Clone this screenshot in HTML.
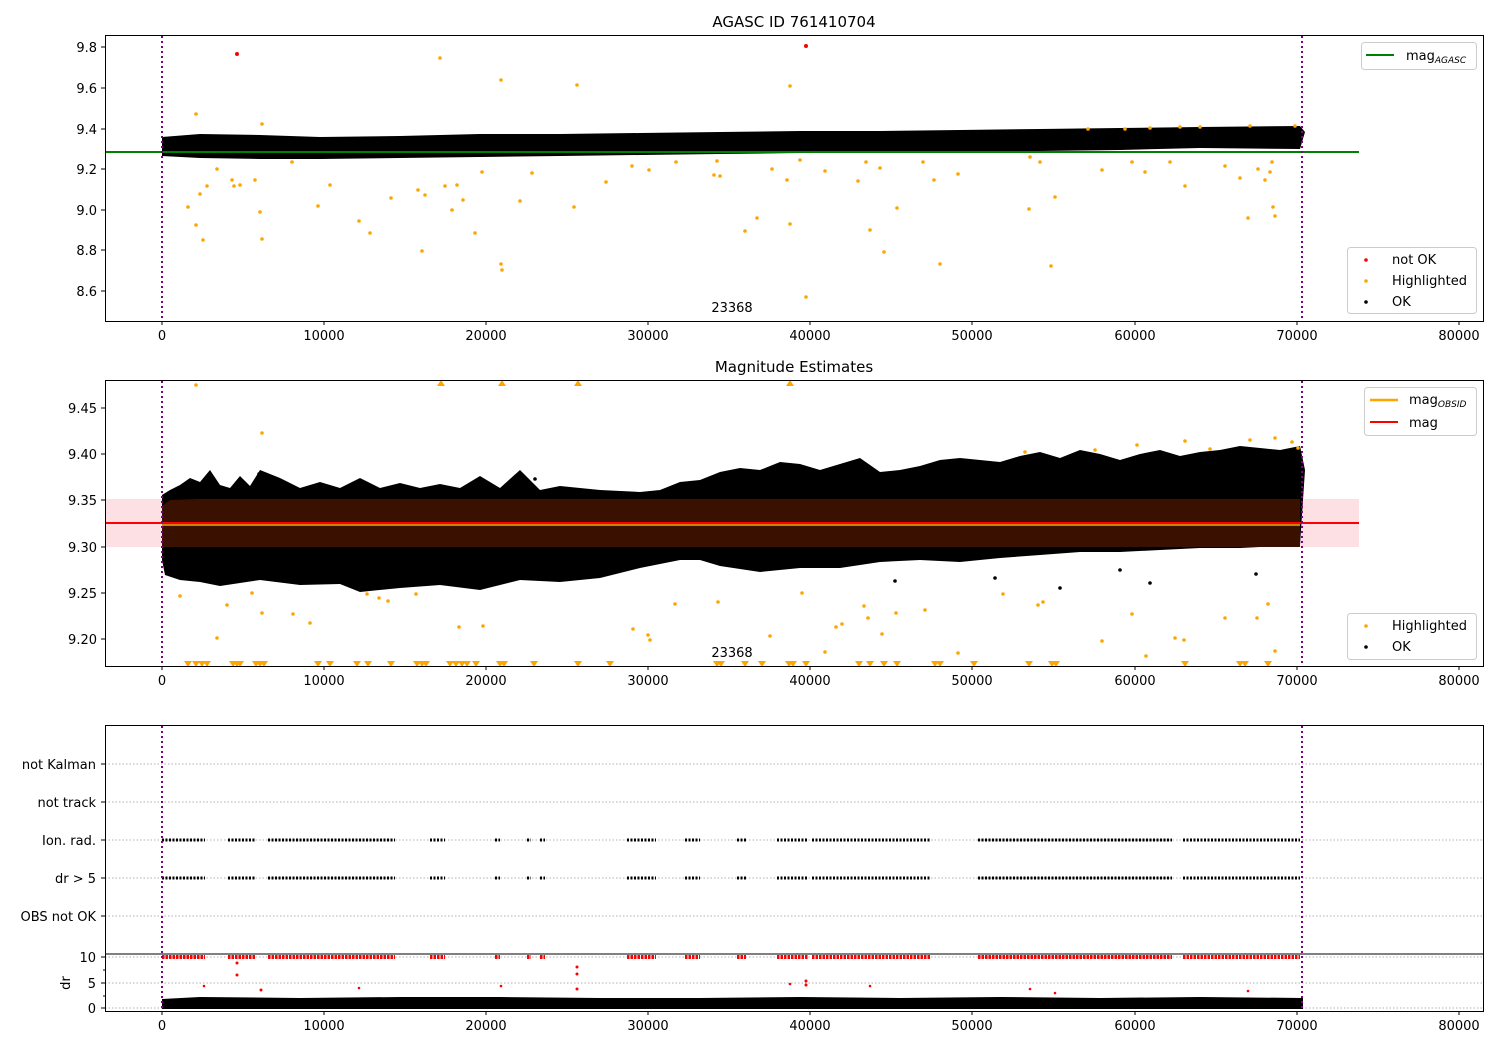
<!DOCTYPE html>
<html><head><meta charset="utf-8"><style>
body{margin:0;background:#fff}
svg{display:block;font-family:"DejaVu Sans","Liberation Sans",sans-serif}
</style></head><body>
<svg width="1500" height="1050" viewBox="0 0 1500 1050" xmlns="http://www.w3.org/2000/svg">
<rect width="1500" height="1050" fill="#fff"/>
<defs>
<g id="xt">
 <g stroke="#000" stroke-width="1"><line x1="162" y1="0" x2="162" y2="4"/><line x1="324" y1="0" x2="324" y2="4"/><line x1="486" y1="0" x2="486" y2="4"/><line x1="648" y1="0" x2="648" y2="4"/><line x1="810" y1="0" x2="810" y2="4"/><line x1="972" y1="0" x2="972" y2="4"/><line x1="1135" y1="0" x2="1135" y2="4"/><line x1="1297" y1="0" x2="1297" y2="4"/><line x1="1459" y1="0" x2="1459" y2="4"/></g>
 <g font-size="13" text-anchor="middle" fill="#000"><text x="162" y="19">0</text><text x="324" y="19">10000</text><text x="486" y="19">20000</text><text x="648" y="19">30000</text><text x="810" y="19">40000</text><text x="972" y="19">50000</text><text x="1135" y="19">60000</text><text x="1297" y="19">70000</text><text x="1459" y="19">80000</text></g>
</g>
</defs>

<!-- ========== PLOT 1 ========== -->
<text x="794" y="27" font-size="15" text-anchor="middle">AGASC ID 761410704</text>
<polygon fill="#000" points="162,137 200,134 260,135 320,137 400,136 480,134 560,134 640,133 720,132 800,131 880,131 960,130 1040,129 1120,128 1200,127 1300,126 1305,132 1300,149 1200,148 1120,150 1040,151 960,152 880,153 800,153 720,154 640,155 560,156 480,157 400,158 320,159 260,159 200,158 162,156"/>
<line x1="105" y1="152" x2="1359" y2="152" stroke="#008000" stroke-width="2"/>
<g fill="#ffa500">
<circle cx="196" cy="114" r="1.8"/><circle cx="262" cy="124" r="1.8"/><circle cx="188" cy="207" r="1.8"/><circle cx="196" cy="225" r="1.8"/><circle cx="203" cy="240" r="1.8"/><circle cx="200" cy="194" r="1.8"/><circle cx="207" cy="186" r="1.8"/><circle cx="217" cy="169" r="1.8"/><circle cx="232" cy="180" r="1.8"/><circle cx="234" cy="186" r="1.8"/><circle cx="240" cy="185" r="1.8"/><circle cx="255" cy="180" r="1.8"/><circle cx="260" cy="212" r="1.8"/><circle cx="262" cy="239" r="1.8"/><circle cx="292" cy="162" r="1.8"/><circle cx="318" cy="206" r="1.8"/><circle cx="330" cy="185" r="1.8"/><circle cx="359" cy="221" r="1.8"/><circle cx="370" cy="233" r="1.8"/><circle cx="391" cy="198" r="1.8"/><circle cx="418" cy="190" r="1.8"/><circle cx="422" cy="251" r="1.8"/><circle cx="425" cy="195" r="1.8"/><circle cx="440" cy="58" r="1.8"/><circle cx="445" cy="186" r="1.8"/><circle cx="452" cy="210" r="1.8"/><circle cx="457" cy="185" r="1.8"/><circle cx="463" cy="200" r="1.8"/><circle cx="475" cy="233" r="1.8"/><circle cx="482" cy="172" r="1.8"/><circle cx="501" cy="80" r="1.8"/><circle cx="501" cy="264" r="1.8"/><circle cx="502" cy="270" r="1.8"/><circle cx="520" cy="201" r="1.8"/><circle cx="532" cy="173" r="1.8"/><circle cx="574" cy="207" r="1.8"/><circle cx="577" cy="85" r="1.8"/><circle cx="606" cy="182" r="1.8"/><circle cx="632" cy="166" r="1.8"/><circle cx="649" cy="170" r="1.8"/><circle cx="676" cy="162" r="1.8"/><circle cx="714" cy="175" r="1.8"/><circle cx="717" cy="161" r="1.8"/><circle cx="720" cy="176" r="1.8"/><circle cx="745" cy="231" r="1.8"/><circle cx="757" cy="218" r="1.8"/><circle cx="772" cy="169" r="1.8"/><circle cx="787" cy="180" r="1.8"/><circle cx="790" cy="86" r="1.8"/><circle cx="790" cy="224" r="1.8"/><circle cx="800" cy="160" r="1.8"/><circle cx="825" cy="171" r="1.8"/><circle cx="858" cy="181" r="1.8"/><circle cx="866" cy="162" r="1.8"/><circle cx="870" cy="230" r="1.8"/><circle cx="880" cy="168" r="1.8"/><circle cx="884" cy="252" r="1.8"/><circle cx="897" cy="208" r="1.8"/><circle cx="923" cy="162" r="1.8"/><circle cx="934" cy="180" r="1.8"/><circle cx="940" cy="264" r="1.8"/><circle cx="958" cy="174" r="1.8"/><circle cx="1030" cy="157" r="1.8"/><circle cx="1029" cy="209" r="1.8"/><circle cx="1040" cy="162" r="1.8"/><circle cx="1051" cy="266" r="1.8"/><circle cx="1055" cy="197" r="1.8"/><circle cx="1102" cy="170" r="1.8"/><circle cx="1132" cy="162" r="1.8"/><circle cx="1145" cy="172" r="1.8"/><circle cx="1170" cy="162" r="1.8"/><circle cx="1185" cy="186" r="1.8"/><circle cx="1225" cy="166" r="1.8"/><circle cx="1240" cy="178" r="1.8"/><circle cx="1248" cy="218" r="1.8"/><circle cx="1258" cy="169" r="1.8"/><circle cx="1265" cy="180" r="1.8"/><circle cx="1272" cy="162" r="1.8"/><circle cx="1273" cy="207" r="1.8"/><circle cx="1275" cy="216" r="1.8"/><circle cx="1270" cy="172" r="1.8"/>
<circle cx="1125" cy="129" r="1.8"/><circle cx="1150" cy="128" r="1.8"/><circle cx="1180" cy="127" r="1.8"/><circle cx="1200" cy="127" r="1.8"/><circle cx="1250" cy="126" r="1.8"/><circle cx="1295" cy="126" r="1.8"/><circle cx="1088" cy="129" r="1.8"/>
</g>
<circle cx="237" cy="54" r="2" fill="#f00"/><circle cx="806" cy="46" r="2" fill="#f00"/>
<circle cx="806" cy="297" r="1.8" fill="#ffa500"/>
<line x1="162" y1="36" x2="162" y2="320" stroke="#800080" stroke-width="2" stroke-dasharray="2,3"/>
<line x1="1302" y1="36" x2="1302" y2="320" stroke="#800080" stroke-width="2" stroke-dasharray="2,3"/>
<text x="732" y="312" font-size="13" text-anchor="middle">23368</text>
<rect x="105.5" y="35.5" width="1378" height="286" fill="none" stroke="#000"/>
<g stroke="#000"><line x1="101" y1="47" x2="105" y2="47"/><line x1="101" y1="88" x2="105" y2="88"/><line x1="101" y1="129" x2="105" y2="129"/><line x1="101" y1="169" x2="105" y2="169"/><line x1="101" y1="210" x2="105" y2="210"/><line x1="101" y1="250" x2="105" y2="250"/><line x1="101" y1="291" x2="105" y2="291"/></g>
<g font-size="13" text-anchor="end"><text x="97" y="52">9.8</text><text x="97" y="93">9.6</text><text x="97" y="134">9.4</text><text x="97" y="174">9.2</text><text x="97" y="215">9.0</text><text x="97" y="255">8.8</text><text x="97" y="296">8.6</text></g>
<g transform="translate(0,321)"><use href="#xt"/></g>
<rect x="1361.5" y="42.5" width="115" height="27" rx="3" fill="#fff" stroke="#ccc"/>
<line x1="1366" y1="55" x2="1394" y2="55" stroke="#008000" stroke-width="2"/>
<text x="1406" y="60" font-size="13">mag<tspan font-size="9" font-style="italic" dy="3">AGASC</tspan></text>
<rect x="1347.5" y="247.5" width="129" height="66" rx="3" fill="#fff" stroke="#ccc"/>
<circle cx="1366" cy="260" r="1.8" fill="#f00"/><circle cx="1366" cy="281" r="1.8" fill="#ffa500"/><circle cx="1366" cy="302" r="1.8" fill="#000"/>
<g font-size="13"><text x="1392" y="264">not OK</text><text x="1392" y="285">Highlighted</text><text x="1392" y="306">OK</text></g>

<!-- ========== PLOT 2 ========== -->
<text x="794" y="372" font-size="15" text-anchor="middle">Magnitude Estimates</text>
<rect x="105" y="499" width="1254" height="48" fill="#fde0e3"/>
<rect x="162" y="499" width="1138" height="48" fill="#fdd3c2"/>
<polygon fill="#000" points="162,495 170,490 180,485 190,478 200,482 210,470 220,485 230,488 240,476 250,486 260,470 280,478 300,488 320,482 340,488 360,478 380,488 400,483 420,488 440,484 460,488 480,476 500,488 520,470 540,490 560,486 600,490 640,492 660,490 680,482 700,480 720,472 740,468 760,470 780,462 800,464 820,470 840,464 860,458 880,472 900,470 920,466 940,460 960,458 980,460 1000,462 1020,456 1040,452 1060,458 1080,450 1100,454 1120,460 1140,454 1160,450 1180,456 1200,452 1220,450 1240,446 1260,448 1280,450 1300,446 1305,470 1300,545 1280,545 1260,547 1240,548 1200,548 1160,550 1120,552 1080,552 1040,555 1000,558 960,562 920,560 880,562 840,568 800,568 760,572 720,566 700,560 680,560 640,568 600,578 560,582 520,580 480,590 440,585 400,588 360,592 340,584 300,585 260,580 220,586 200,582 180,580 165,575 162,560"/>
<polygon fill="#3a1100" points="162,506 170,500 200,499 1300,499 1300,547 162,547"/>
<line x1="105" y1="523" x2="1359" y2="523" stroke="#f00" stroke-width="2"/>
<line x1="162" y1="525" x2="1300" y2="525" stroke="#ffa500" stroke-width="1.5"/>
<g fill="#000"><circle cx="259" cy="474" r="1.8"/><circle cx="260" cy="495" r="1.8"/><circle cx="535" cy="479" r="1.8"/><circle cx="995" cy="578" r="1.8"/><circle cx="1120" cy="570" r="1.8"/><circle cx="1150" cy="583" r="1.8"/><circle cx="1256" cy="574" r="1.8"/><circle cx="895" cy="581" r="1.8"/><circle cx="1060" cy="588" r="1.8"/></g>
<g fill="#ffa500">
<circle cx="196" cy="385" r="1.8"/><circle cx="262" cy="433" r="1.8"/><circle cx="180" cy="596" r="1.8"/><circle cx="227" cy="605" r="1.8"/><circle cx="217" cy="638" r="1.8"/><circle cx="252" cy="593" r="1.8"/><circle cx="262" cy="613" r="1.8"/><circle cx="293" cy="614" r="1.8"/><circle cx="310" cy="623" r="1.8"/><circle cx="367" cy="594" r="1.8"/><circle cx="379" cy="598" r="1.8"/><circle cx="388" cy="601" r="1.8"/><circle cx="416" cy="594" r="1.8"/><circle cx="459" cy="627" r="1.8"/><circle cx="483" cy="626" r="1.8"/><circle cx="633" cy="629" r="1.8"/><circle cx="648" cy="635" r="1.8"/><circle cx="650" cy="640" r="1.8"/><circle cx="675" cy="604" r="1.8"/><circle cx="718" cy="602" r="1.8"/><circle cx="770" cy="636" r="1.8"/><circle cx="802" cy="593" r="1.8"/><circle cx="825" cy="652" r="1.8"/><circle cx="836" cy="627" r="1.8"/><circle cx="842" cy="624" r="1.8"/><circle cx="864" cy="606" r="1.8"/><circle cx="868" cy="618" r="1.8"/><circle cx="882" cy="634" r="1.8"/><circle cx="896" cy="613" r="1.8"/><circle cx="925" cy="610" r="1.8"/><circle cx="958" cy="653" r="1.8"/><circle cx="1003" cy="594" r="1.8"/><circle cx="1038" cy="605" r="1.8"/><circle cx="1043" cy="602" r="1.8"/><circle cx="1102" cy="641" r="1.8"/><circle cx="1132" cy="614" r="1.8"/><circle cx="1146" cy="656" r="1.8"/><circle cx="1175" cy="638" r="1.8"/><circle cx="1184" cy="640" r="1.8"/><circle cx="1225" cy="618" r="1.8"/><circle cx="1257" cy="618" r="1.8"/><circle cx="1268" cy="604" r="1.8"/><circle cx="1275" cy="651" r="1.8"/><circle cx="1025" cy="452" r="1.8"/><circle cx="1095" cy="450" r="1.8"/><circle cx="1137" cy="445" r="1.8"/><circle cx="1185" cy="441" r="1.8"/><circle cx="1210" cy="449" r="1.8"/><circle cx="1250" cy="440" r="1.8"/><circle cx="1292" cy="442" r="1.8"/><circle cx="1275" cy="438" r="1.8"/><circle cx="1298" cy="448" r="1.8"/>
</g>
<g fill="#ffa500">
<path d="M437,386 l4,-6 l4,6z M498,386 l4,-6 l4,6z M574,386 l4,-6 l4,6z M786,386 l4,-6 l4,6z"/>
<path d="M184,661 l4,6 l4,-6z M192,661 l4,6 l4,-6z M198,661 l4,6 l4,-6z M203,661 l4,6 l4,-6z M229,661 l4,6 l4,-6z M233,661 l4,6 l4,-6z M236,661 l4,6 l4,-6z M252,661 l4,6 l4,-6z M256,661 l4,6 l4,-6z M260,661 l4,6 l4,-6z M314,661 l4,6 l4,-6z M326,661 l4,6 l4,-6z M353,661 l4,6 l4,-6z M364,661 l4,6 l4,-6z M387,661 l4,6 l4,-6z M413,661 l4,6 l4,-6z M418,661 l4,6 l4,-6z M422,661 l4,6 l4,-6z M446,661 l4,6 l4,-6z M452,661 l4,6 l4,-6z M458,661 l4,6 l4,-6z M463,661 l4,6 l4,-6z M472,661 l4,6 l4,-6z M496,661 l4,6 l4,-6z M500,661 l4,6 l4,-6z M530,661 l4,6 l4,-6z M574,661 l4,6 l4,-6z M606,661 l4,6 l4,-6z M713,661 l4,6 l4,-6z M717,661 l4,6 l4,-6z M741,661 l4,6 l4,-6z M758,661 l4,6 l4,-6z M785,661 l4,6 l4,-6z M789,661 l4,6 l4,-6z M802,661 l4,6 l4,-6z M855,661 l4,6 l4,-6z M866,661 l4,6 l4,-6z M880,661 l4,6 l4,-6z M893,661 l4,6 l4,-6z M931,661 l4,6 l4,-6z M936,661 l4,6 l4,-6z M970,661 l4,6 l4,-6z M1025,661 l4,6 l4,-6z M1048,661 l4,6 l4,-6z M1052,661 l4,6 l4,-6z M1181,661 l4,6 l4,-6z M1236,661 l4,6 l4,-6z M1241,661 l4,6 l4,-6z M1264,661 l4,6 l4,-6z"/>
</g>
<line x1="162" y1="381" x2="162" y2="665" stroke="#800080" stroke-width="2" stroke-dasharray="2,3"/>
<line x1="1302" y1="381" x2="1302" y2="665" stroke="#800080" stroke-width="2" stroke-dasharray="2,3"/>
<text x="732" y="657" font-size="13" text-anchor="middle">23368</text>
<rect x="105.5" y="380.5" width="1378" height="286" fill="none" stroke="#000"/>
<g stroke="#000"><line x1="101" y1="408" x2="105" y2="408"/><line x1="101" y1="454" x2="105" y2="454"/><line x1="101" y1="500" x2="105" y2="500"/><line x1="101" y1="547" x2="105" y2="547"/><line x1="101" y1="593" x2="105" y2="593"/><line x1="101" y1="639" x2="105" y2="639"/></g>
<g font-size="13" text-anchor="end"><text x="97" y="413">9.45</text><text x="97" y="459">9.40</text><text x="97" y="505">9.35</text><text x="97" y="552">9.30</text><text x="97" y="598">9.25</text><text x="97" y="644">9.20</text></g>
<g transform="translate(0,666)"><use href="#xt"/></g>
<rect x="1364.5" y="387.5" width="112" height="48" rx="3" fill="#fff" stroke="#ccc"/>
<line x1="1370" y1="400" x2="1398" y2="400" stroke="#ffa500" stroke-width="2.5"/>
<line x1="1370" y1="422" x2="1398" y2="422" stroke="#f00" stroke-width="2"/>
<text x="1409" y="404" font-size="13">mag<tspan font-size="9" font-style="italic" dy="3">OBSID</tspan></text>
<text x="1409" y="427" font-size="13">mag</text>
<rect x="1347.5" y="613.5" width="129" height="46" rx="3" fill="#fff" stroke="#ccc"/>
<circle cx="1366" cy="626" r="1.8" fill="#ffa500"/><circle cx="1366" cy="647" r="1.8" fill="#000"/>
<g font-size="13"><text x="1392" y="630">Highlighted</text><text x="1392" y="651">OK</text></g>

<!-- ========== PLOT 3 ========== -->
<g stroke="#b0b0b0" stroke-dasharray="1.5,2" stroke-width="1">
<line x1="105" y1="764" x2="1484" y2="764"/><line x1="105" y1="802" x2="1484" y2="802"/><line x1="105" y1="840" x2="1484" y2="840"/><line x1="105" y1="878" x2="1484" y2="878"/><line x1="105" y1="916" x2="1484" y2="916"/>
<line x1="105" y1="957" x2="1484" y2="957"/><line x1="105" y1="983" x2="1484" y2="983"/><line x1="105" y1="1008" x2="1484" y2="1008"/>
</g>
<g stroke="#000" stroke-width="3" stroke-dasharray="2,1.5">
<path d="M162,840H205M228,840H256M268,840H395M430,840H445M495,840H500M527,840H531M540,840H545M627,840H656M685,840H700M737,840H746M777,840H808M812,840H930M978,840H1172M1183,840H1300"/>
<path d="M162,878H205M228,878H256M268,878H395M430,878H445M495,878H500M527,878H531M540,878H545M627,878H656M685,878H700M737,878H746M777,878H808M812,878H930M978,878H1172M1183,878H1300"/>
</g>
<g stroke="#f00" stroke-width="4" stroke-dasharray="2.5,1">
<path d="M162,957H205M228,957H256M268,957H395M430,957H445M495,957H500M527,957H531M540,957H545M627,957H656M685,957H700M737,957H746M777,957H808M812,957H930M978,957H1172M1183,957H1300"/>
</g>
<g fill="#f00"><circle cx="237" cy="963" r="1.5"/><circle cx="237" cy="975" r="1.5"/><circle cx="204" cy="986" r="1.3"/><circle cx="261" cy="990" r="1.5"/><circle cx="501" cy="986" r="1.3"/><circle cx="577" cy="967" r="1.5"/><circle cx="577" cy="974" r="1.5"/><circle cx="577" cy="989" r="1.5"/><circle cx="806" cy="981" r="1.5"/><circle cx="806" cy="985" r="1.5"/><circle cx="359" cy="988" r="1.3"/><circle cx="1030" cy="989" r="1.3"/><circle cx="1055" cy="993" r="1.3"/><circle cx="1248" cy="991" r="1.3"/><circle cx="870" cy="986" r="1.3"/><circle cx="790" cy="984" r="1.3"/></g>
<polygon fill="#000" points="162,999 200,997 300,998 400,997 500,997 600,998 700,998 800,997 900,998 1000,997 1100,998 1200,997 1303,998 1303,1009 162,1009"/>
<line x1="162" y1="726" x2="162" y2="1010" stroke="#800080" stroke-width="2" stroke-dasharray="2,3"/>
<line x1="1302" y1="726" x2="1302" y2="1010" stroke="#800080" stroke-width="2" stroke-dasharray="2,3"/>
<rect x="105.5" y="725.5" width="1378" height="286" fill="none" stroke="#000"/>
<line x1="105" y1="954" x2="1484" y2="954" stroke="#000"/>
<g stroke="#000"><line x1="101" y1="764" x2="105" y2="764"/><line x1="101" y1="802" x2="105" y2="802"/><line x1="101" y1="840" x2="105" y2="840"/><line x1="101" y1="878" x2="105" y2="878"/><line x1="101" y1="916" x2="105" y2="916"/><line x1="101" y1="957" x2="105" y2="957"/><line x1="101" y1="983" x2="105" y2="983"/><line x1="101" y1="1008" x2="105" y2="1008"/><line x1="103" y1="970" x2="105" y2="970"/><line x1="103" y1="996" x2="105" y2="996"/></g>
<g font-size="13" text-anchor="end"><text x="96" y="769">not Kalman</text><text x="96" y="807">not track</text><text x="96" y="845">Ion. rad.</text><text x="96" y="883">dr &gt; 5</text><text x="96" y="921">OBS not OK</text><text x="96" y="962">10</text><text x="96" y="988">5</text><text x="96" y="1013">0</text></g>
<text x="70" y="983" font-size="13" text-anchor="middle" transform="rotate(-90 70 983)">dr</text>
<g transform="translate(0,1011)"><use href="#xt"/></g>
</svg>
</body></html>
